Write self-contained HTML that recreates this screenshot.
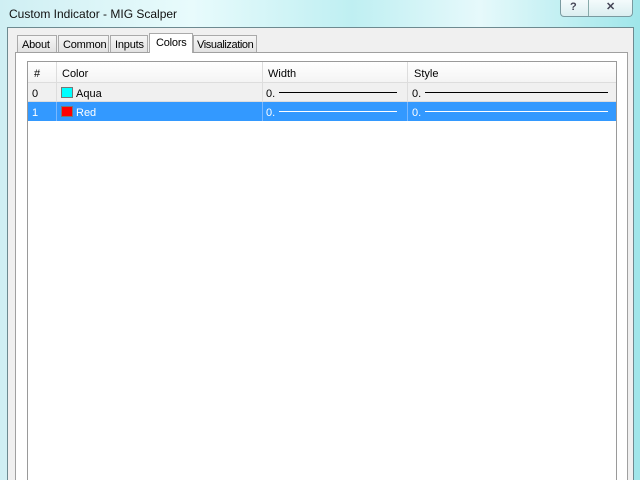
<!DOCTYPE html>
<html><head><style>
*{margin:0;padding:0;box-sizing:border-box}
body{width:640px;height:480px;overflow:hidden;background:linear-gradient(90deg,#cfeff3,#e8fbfc 30%,#bfeff2 55%,#e6f9fb 75%,#9fe6ea);font-family:"Liberation Sans",sans-serif;font-size:11px;color:#000;position:relative}
.a{position:absolute}
.title{left:9px;top:7px;font-size:12px;color:#111}
.btns{left:560px;top:0;width:73px;height:17px;border:1px solid #7a9aa0;border-top:none;border-radius:0 0 4px 4px;background:linear-gradient(#f4fbfc,#dbeef0)}
.client{left:7px;top:27px;width:627px;height:453px;background:#f0f0f0;border:1px solid #6d8a90;border-bottom:none}
.tab{top:35px;height:17px;border:1px solid #aaa;border-bottom:none;background:linear-gradient(#f6f6f6,#e2e2e2);padding:3px 0 0 4px;font-size:11px;letter-spacing:-0.2px;white-space:nowrap;overflow:hidden}
.sel{top:33px;height:20px;background:#fff;z-index:2;padding-top:3px}
.panel{left:15px;top:52px;width:613px;height:428px;background:#fff;border:1px solid #a0a0a0;border-bottom:none}
.list{left:27px;top:61px;width:590px;height:419px;background:#fff;border:1px solid #9a9a9a;border-bottom:none}
.hdr{left:28px;top:62px;width:588px;height:21px;background:linear-gradient(#fff,#f4f4f4);border-bottom:1px solid #ddd}
.row{left:28px;width:588px;height:19px}
.c{position:absolute;top:5px}
.vl{position:absolute;top:0;width:1px;height:100%;background:#ddd}
.sw{position:absolute;top:4px;left:33px;width:12px;height:11px;border:1px solid #777}
.ln{position:absolute;top:9px;height:1px}
</style></head><body>
<div class="a title">Custom Indicator - MIG Scalper</div>
<div class="a btns"><span style="position:absolute;left:9px;top:1px;font-weight:bold;color:#445">?</span><div style="position:absolute;left:27px;top:0;width:1px;height:16px;background:#8aa"></div><span style="position:absolute;left:45px;top:0;font-weight:bold;color:#445">✕</span></div>
<div class="a client"></div>
<div class="a panel"></div>
<div class="a tab" style="left:17px;width:40px">About</div>
<div class="a tab" style="left:58px;width:51px">Common</div>
<div class="a tab" style="left:110px;width:38px">Inputs</div>
<div class="a tab sel" style="left:149px;width:44px;padding-left:6px">Colors</div>
<div class="a tab" style="left:193px;width:64px;padding-left:3px;letter-spacing:-0.4px">Visualization</div>
<div class="a list"></div>
<div class="a hdr"><span class="c" style="left:6px;top:6px">#</span><span class="c" style="left:34px;top:6px">Color</span><span class="c" style="left:240px;top:6px">Width</span><span class="c" style="left:386px;top:6px">Style</span><div class="vl" style="left:28px"></div><div class="vl" style="left:234px"></div><div class="vl" style="left:379px"></div></div>
<div class="a row" style="top:83px;background:#f0f0f0;border-bottom:1px solid #ddd"><span class="c" style="left:4px">0</span><div class="sw" style="background:#0ff"></div><span class="c" style="left:48px">Aqua</span><span class="c" style="left:238px">0.</span><div class="ln" style="left:251px;width:118px;background:#000"></div><span class="c" style="left:384px">0.</span><div class="ln" style="left:397px;width:183px;background:#000"></div><div class="vl" style="left:28px"></div><div class="vl" style="left:234px"></div><div class="vl" style="left:379px"></div></div>
<div class="a row" style="top:102px;background:#3399ff;color:#fff"><span class="c" style="left:4px">1</span><div class="sw" style="background:#f00"></div><span class="c" style="left:48px">Red</span><span class="c" style="left:238px">0.</span><div class="ln" style="left:251px;width:118px;background:#fff"></div><span class="c" style="left:384px">0.</span><div class="ln" style="left:397px;width:183px;background:#fff"></div><div class="vl" style="left:28px;background:#7ab8ff"></div><div class="vl" style="left:234px;background:#7ab8ff"></div><div class="vl" style="left:379px;background:#7ab8ff"></div></div>
</body></html>
